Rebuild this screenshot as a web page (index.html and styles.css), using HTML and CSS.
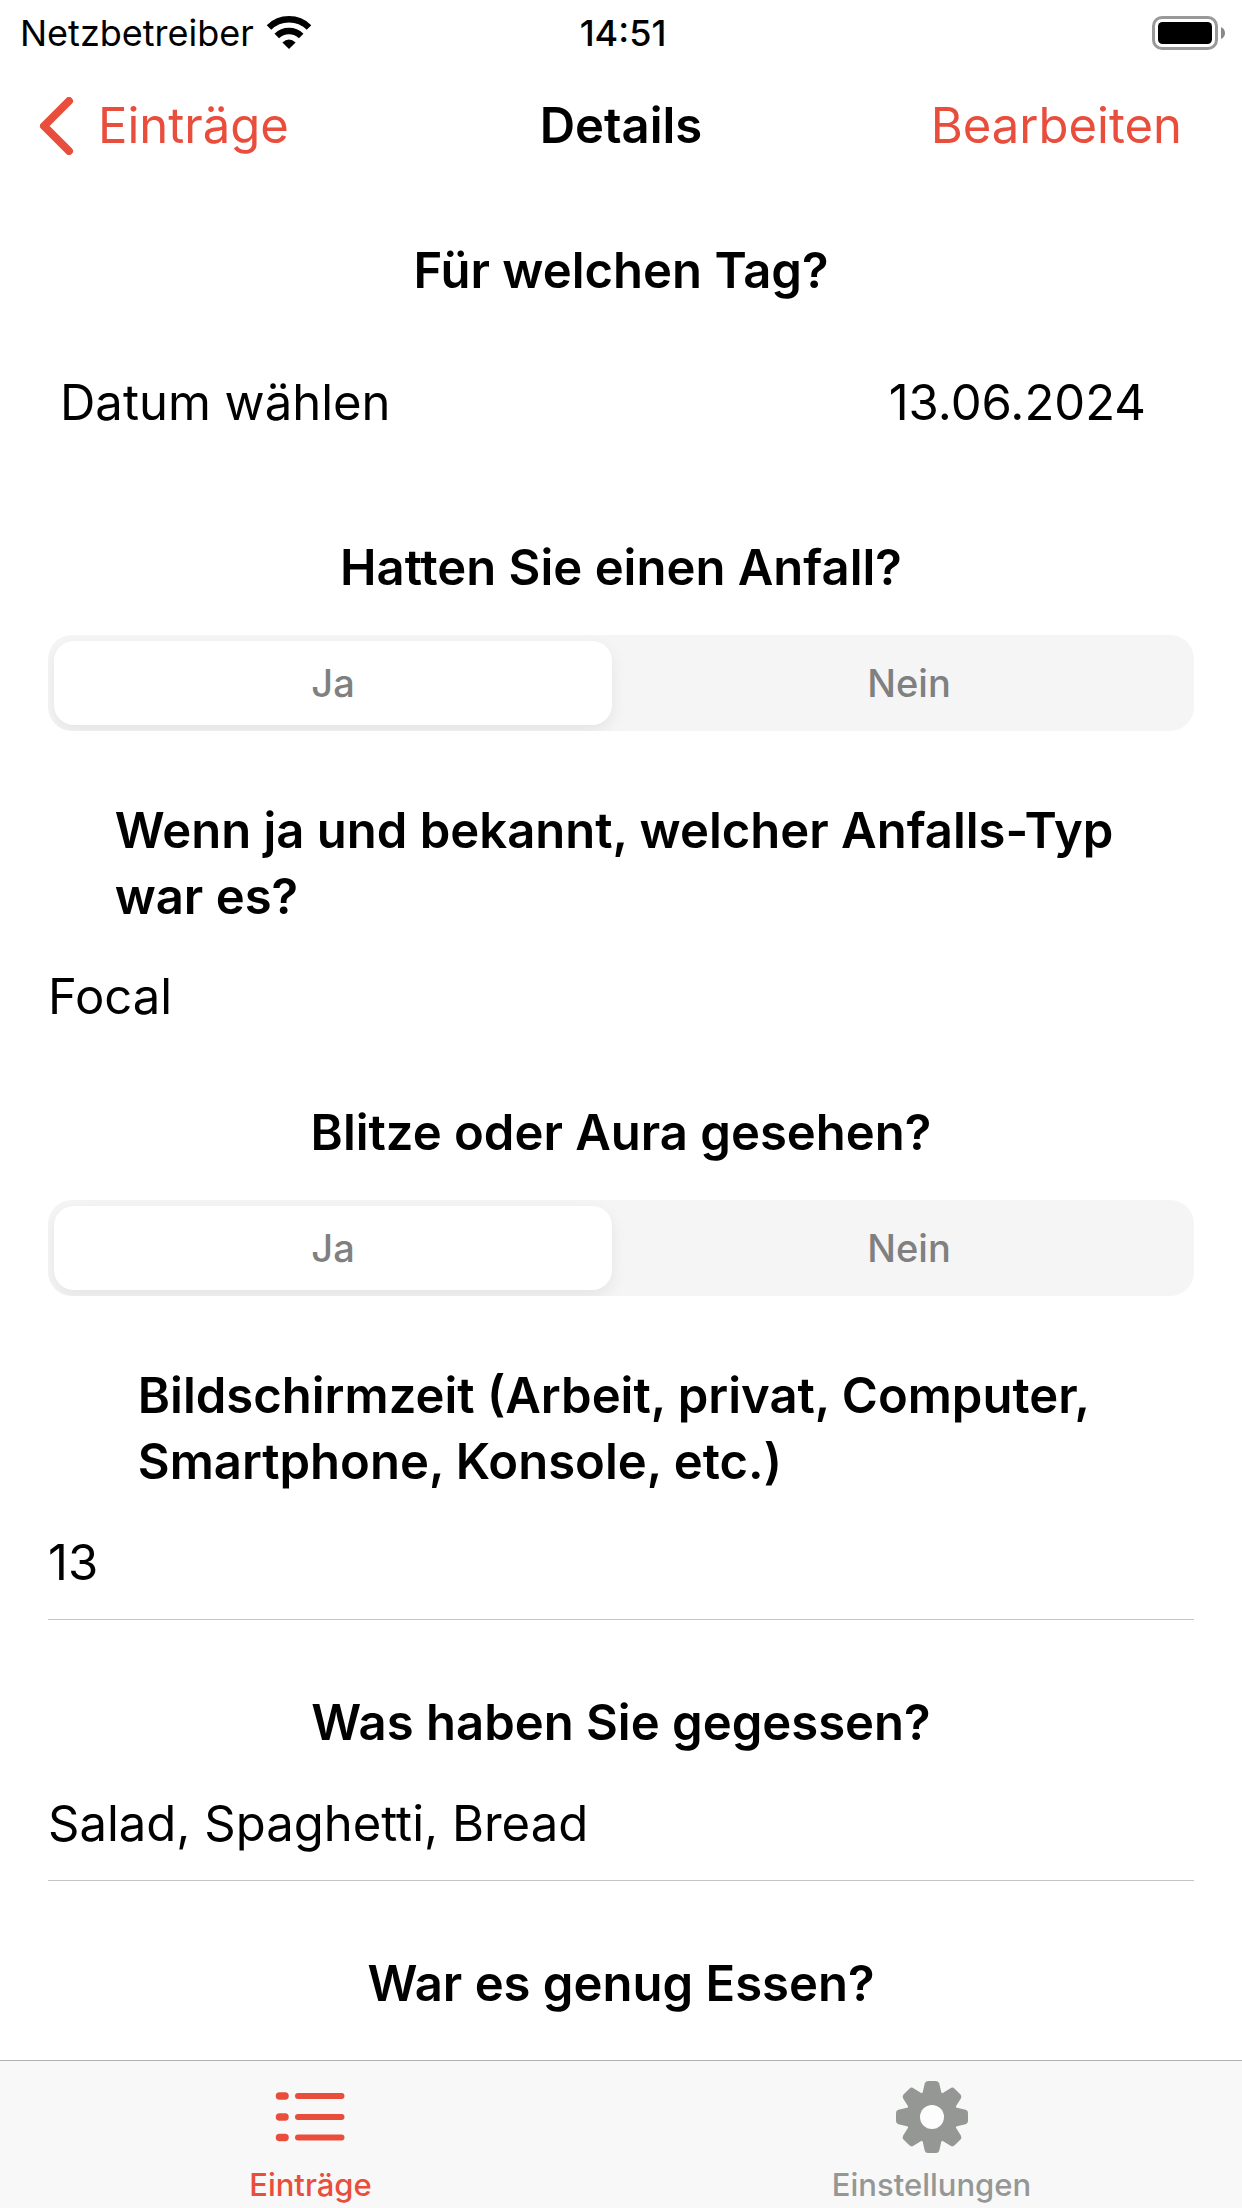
FILE: index.html
```html
<!DOCTYPE html>
<html lang="de">
<head>
    <meta charset="UTF-8">
    <meta name="viewport" content="width=device-width, initial-scale=1.0">
    <title>Details</title>
    <link rel="stylesheet" href="styles.css">
</head>
<body>

    <!-- Status Bar -->
    <div class="status-bar">
        <div class="carrier">
            <span>Netzbetreiber</span>
            <svg class="wifi" viewBox="0 0 46 34" aria-hidden="true">
                <path d="M3 11.500A28.500 28.500 0 0 1 43 11.500" fill="none" stroke="#000" stroke-width="6.500"/>
                <path d="M10.800 20A17.500 17.500 0 0 1 35.200 20" fill="none" stroke="#000" stroke-width="6.500"/>
                <path d="M23 33L16.400 26.400Q23 20.600 29.600 26.400Z"/>
            </svg>
        </div>
        <span class="clock">14:51</span>
        <svg class="battery" viewBox="0 0 74 34" aria-hidden="true">
            <rect x="1.500" y="1.500" width="63" height="31" rx="8.500" fill="none" stroke="#999" stroke-width="3"/>
            <rect x="6" y="6" width="54" height="22" rx="4.500"/>
            <path d="M69 11Q73 13 73 17T69 23Z" fill="#888"/>
        </svg>
    </div>

    <!-- Navigation Bar -->
    <header class="nav-bar">
        <a class="back" href="#">
            <svg class="chevron" viewBox="0 0 34 58" aria-hidden="true">
                <path d="M29 4L4 29L29 54" fill="none" stroke="currentColor" stroke-width="8" stroke-linecap="round" stroke-linejoin="round"/>
            </svg>
            <span>Einträge</span>
        </a>
        <h1>Details</h1>
        <button class="edit" type="button">Bearbeiten</button>
    </header>

    <!-- Entry -->
    <main class="entry">
        <section class="question">
            <h2>Für welchen Tag?</h2>
            <div class="date-row">
                <label for="date">Datum wählen</label>
                <input id="date" type="text" value="13.06.2024" readonly>
            </div>
        </section>

        <section class="question">
            <h2 id="seizure-title">Hatten Sie einen Anfall?</h2>
            <div class="segmented" role="radiogroup" aria-labelledby="seizure-title">
                <label><input type="radio" name="seizure" checked><span>Ja</span></label>
                <label><input type="radio" name="seizure"><span>Nein</span></label>
            </div>
        </section>

        <section class="question">
            <h2 class="long">Wenn ja und bekannt, welcher Anfalls-Typ<br>war es?</h2>
            <p class="value">Focal</p>
        </section>

        <section class="question">
            <h2 id="aura-title">Blitze oder Aura gesehen?</h2>
            <div class="segmented" role="radiogroup" aria-labelledby="aura-title">
                <label><input type="radio" name="aura" checked><span>Ja</span></label>
                <label><input type="radio" name="aura"><span>Nein</span></label>
            </div>
        </section>

        <section class="question">
            <h2 class="long"><label for="screen-time">Bildschirmzeit (Arbeit, privat, Computer,<br>Smartphone, Konsole, etc.)</label></h2>
            <input class="field" id="screen-time" type="text" value="13" readonly>
        </section>

        <section class="question">
            <h2><label for="food">Was haben Sie gegessen?</label></h2>
            <input class="field" id="food" type="text" value="Salad, Spaghetti, Bread" readonly>
        </section>

        <section class="question">
            <h2>War es genug Essen?</h2>
        </section>
    </main>

    <!-- Tab Bar -->
    <nav class="tab-bar">
        <a class="tab active" href="#">
            <svg viewBox="0 0 76 76" aria-hidden="true">
                <g fill="none" stroke="currentColor" stroke-linecap="round">
                    <path d="M6.500 17H12M6.500 38H12M6.500 58.500H12" stroke-width="7.500"/>
                    <path d="M25 17H68.500M25 38H68.500M25 58.500H68.500" stroke-width="6"/>
                </g>
            </svg>
            <span>Einträge</span>
        </a>
        <a class="tab" href="#">
            <svg viewBox="-38 -38 76 76" aria-hidden="true">
                <defs>
                    <path id="tooth" d="M-10 -22L-9 -26L-7.300 -33.500Q-6.700 -36 -4 -36H4Q6.700 -36 7.300 -33.500L9 -26L10 -22Z"/>
                </defs>
                <g fill="currentColor">
                    <circle r="26"/>
                    <use href="#tooth"/>
                    <use href="#tooth" transform="rotate(45)"/>
                    <use href="#tooth" transform="rotate(90)"/>
                    <use href="#tooth" transform="rotate(135)"/>
                    <use href="#tooth" transform="rotate(180)"/>
                    <use href="#tooth" transform="rotate(225)"/>
                    <use href="#tooth" transform="rotate(270)"/>
                    <use href="#tooth" transform="rotate(315)"/>
                </g>
                <circle r="12" fill="#fdfdfd"/>
            </svg>
            <span>Einstellungen</span>
        </a>
    </nav>

</body>
</html>
```

FILE: styles.css
```css
* {
    box-sizing: border-box;
}

body {
    font-family: Inter, "Liberation Sans", sans-serif;
    font-size: 49px;
    line-height: 66px;
    margin: 0;
    height: 100vh;
    display: flex;
    flex-direction: column;
    background-color: #fff;
    color: #000;
}

h1, h2, p {
    margin: 0;
    font-size: inherit;
}

h1, h2 {
    font-weight: 600;
}

a {
    color: inherit;
    text-decoration: none;
}

input, button {
    font: inherit;
    color: inherit;
    margin: 0;
    padding: 0;
    border: none;
    border-radius: 0;
    background: none;
    outline: none;
}

.status-bar, .nav-bar {
    flex: none;
    display: grid;
    grid-template-columns: 1fr auto 1fr;
    align-items: center;
}

.status-bar {
    height: 60px;
    padding: 0 16px 4px 20px;
    font-size: 36px;
}

.carrier {
    display: flex;
    align-items: center;
    gap: 12px;
}

.wifi {
    width: 46px;
    height: 34px;
}

.clock {
    font-weight: 500;
}

.battery {
    justify-self: end;
    width: 74px;
    height: 34px;
}

.nav-bar {
    height: 132px;
    padding: 0 40px;
}

.back {
    display: flex;
    align-items: center;
    gap: 24px;
    color: #e94e3d;
}

.chevron {
    width: 34px;
    height: 58px;
}

.edit {
    justify-self: end;
    padding-right: 20px;
    color: #e94e3d;
    cursor: pointer;
}

.entry {
    flex: 1;
    min-height: 0;
    overflow-y: auto;
    padding: 46px 48px 0;
}

.question {
    margin-bottom: 67px;
}

.question:last-child {
    margin-bottom: 0;
}

.question h2 {
    width: fit-content;
    margin: 0 auto 34px;
}

.question h2.long {
    padding-right: 14px;
}

.question:last-child h2 {
    margin-bottom: 0;
}

.date-row {
    display: flex;
    justify-content: space-between;
    padding: 32px 48px 32px 12px;
}

.date-row input {
    width: 50%;
    height: 66px;
    text-align: right;
}

.segmented {
    display: flex;
    gap: 18px;
    height: 96px;
    padding: 6px;
    border-radius: 24px;
    background-color: #f5f5f5;
    overflow: hidden;
    color: #808080;
    font-size: 38px;
    font-weight: 500;
}

.segmented label {
    flex: 1;
    display: flex;
    cursor: pointer;
}

.segmented input {
    position: absolute;
    opacity: 0;
}

.segmented span {
    flex: 1;
    display: flex;
    align-items: center;
    justify-content: center;
    border-radius: 20px;
}

.segmented input:checked + span {
    background-color: #fff;
    box-shadow: 0 6px 16px rgba(0, 0, 0, 0.07);
}

.value {
    margin-bottom: 70px;
}

.field {
    display: block;
    width: 100%;
    height: 91px;
    margin-bottom: 70px;
    padding-bottom: 23px;
    border-bottom: 1px solid #c4c4c4;
}

.tab-bar {
    flex: none;
    display: flex;
    height: 148px;
    padding-top: 18px;
    border-top: 1px solid #b0b0b0;
    background-color: #f8f8f8;
}

.tab {
    flex: 1;
    display: flex;
    flex-direction: column;
    align-items: center;
    gap: 12px;
    color: #959795;
    font-size: 31px;
    font-weight: 500;
    line-height: 36px;
}

.tab svg {
    width: 76px;
    height: 76px;
}

.tab.active {
    color: #e94e3d;
}
```
